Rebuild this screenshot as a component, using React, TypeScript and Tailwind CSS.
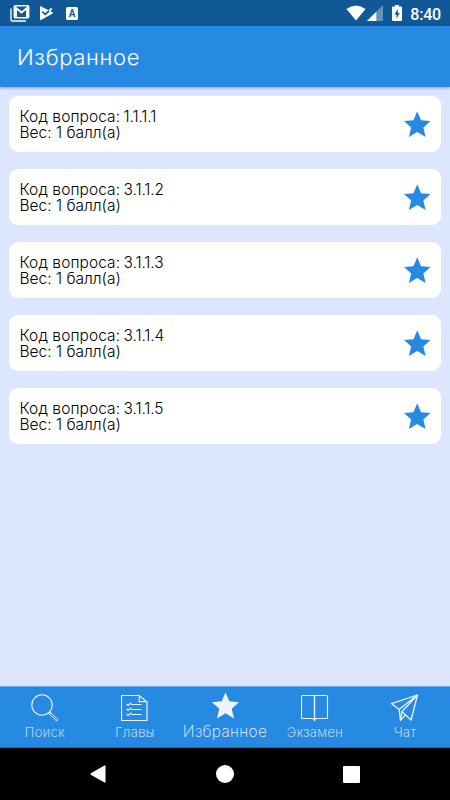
import React, { useState } from "react";
import clsx from "clsx";

const questions = [
  { code: "1.1.1.1", weight: 1, tracking: "tracking-[-0.1px]" },
  { code: "3.1.1.2", weight: 1, tracking: "tracking-[-0.1px]" },
  { code: "3.1.1.3", weight: 1, tracking: "tracking-[-0.1px]" },
  { code: "3.1.1.4", weight: 1, tracking: "tracking-[-0.1px]" },
  { code: "3.1.1.5", weight: 1, tracking: "tracking-[-0.1px]" },
];

function StarIcon({ className }: { className?: string }) {
  return (
    <svg viewBox="0 0 26 26" className={className} fill="currentColor">
      <path d="M13 0.2L16.7 9L26 9.9L19 16.1L21.2 25.4L13 20.5L4.8 25.4L7 16.1L0 9.9L9.3 9Z" />
    </svg>
  );
}

function SearchIcon() {
  return (
    <svg viewBox="0 0 28 28" className="size-7" fill="none" stroke="currentColor">
      <circle cx="11" cy="11" r="10.2" strokeWidth="1.1" />
      <path d="M18 18.4l1.6 1.4" strokeWidth="1" />
      <path d="M19.2 18.4l7.8 7.2l-1.3 1.4l-7.8-7.3z" strokeWidth="0.9" />
    </svg>
  );
}

function ChaptersIcon() {
  return (
    <svg viewBox="1 0 28 28" className="size-7" fill="none" stroke="currentColor" strokeWidth="1.2">
      <path d="M1.5 1.5h17.8l7.7 6.5v18.5H1.5z" />
      <path d="M19.3 1.5v6.2h7.7" />
      <path d="M11 10.5H21.5M11 15.5H21.5M11 20.5H21.5" />
      <path d="M6.5 9.8l1.5 1.6l3.4-2.6M6.5 14.8l1.5 1.6l3.4-2.6M6.5 19.8l1.5 1.6l3.4-2.6" />
    </svg>
  );
}

function BookIcon() {
  return (
    <svg viewBox="1 0 28 28" className="size-7" fill="none" stroke="currentColor" strokeWidth="1.1">
      <path d="M2.5 1.5H26.5Q27.5 1.5 27.5 2.5V23.5Q27.5 24.5 26.5 24.5H16L14.5 26.5L13 24.5H2.5Q1.5 24.5 1.5 23.5V2.5Q1.5 1.5 2.5 1.5Z" />
      <path d="M14.5 1.5V26" strokeWidth="1.4" />
    </svg>
  );
}

function PlaneIcon() {
  return (
    <svg viewBox="0.5 0 28 28" className="size-7" fill="none" stroke="currentColor" strokeWidth="1.3" strokeLinejoin="round">
      <path d="M27 1L1 9.6L8.6 15.4L10 26.4L14.8 20.8L20.6 26Z" />
      <path d="M27 1L8.6 15.4M27 1L11.4 17.6L14.8 20.8M11.4 17.6L10 26" />
    </svg>
  );
}

const tabs = [
  { id: "search", title: "Поиск", icon: <SearchIcon /> },
  { id: "chapters", title: "Главы", icon: <ChaptersIcon /> },
  { id: "favorites", title: "Избранное", icon: <StarIcon className="size-[27px]" /> },
  { id: "exam", title: "Экзамен", icon: <BookIcon /> },
  { id: "chat", title: "Чат", icon: <PlaneIcon /> },
];

function StatusBar() {
  return (
    <div className="flex h-[26px] items-center bg-[#105996] pl-[10px] pr-[9px] text-white">
      <svg viewBox="0 0 20 18" className="h-[18px] w-5" fill="none" stroke="currentColor">
        <path d="M1 4.5V15.8Q1 17 2.2 17H16" strokeWidth="1.3" />
        <rect x="4.4" y="1.8" width="14.2" height="12" rx="0.8" strokeWidth="1.6" />
        <path d="M6 13V4L11.5 8.6L17 4V13" strokeWidth="1.9" />
      </svg>
      <svg viewBox="0 0 14 16" className="ml-[9px] h-4 w-3.5">
        <path d="M1.2 1L13.5 7.2Q14.2 8 13.3 8.7L2 15Q1 15.4 1 14V1.5Z" fill="currentColor" />
        <path d="M3.2 6.6L6.4 9.4L13 3.2" fill="none" stroke="#105996" strokeWidth="1.6" />
        <path d="M10 6L12.8 3.4" fill="none" stroke="currentColor" strokeWidth="1.8" />
      </svg>
      <span className="ml-[13px] flex h-[13px] w-3 items-center justify-center rounded-[1.5px] bg-white font-['Roboto',sans-serif] text-[10px] font-bold text-[#105996]">
        A
      </span>
      <svg viewBox="0 0 20 16" className="ml-auto h-4 w-5" fill="currentColor">
        <path d="M0.4 4Q10-3.2 19.6 4L10 15.5Z" />
      </svg>
      <svg viewBox="0 0 16 16" className="ml-[1px] h-4 w-4" fill="currentColor">
        <path d="M0 16L16 0V16Z" opacity="0.35" />
        <path d="M0 16L9.3 6.7V16Z" />
      </svg>
      <svg viewBox="0 0 10 16" className="ml-[9px] h-4 w-2.5" fill="currentColor">
        <path d="M3 0h4v1.5h2q1 0 1 1V15q0 1-1 1H1q-1 0-1-1V2.5q0-1 1-1H3z" />
        <path d="M5.8 4L2.3 9.4H4.5V13.5L7.8 8H5.8Z" fill="#105996" />
      </svg>
      <span className="ml-[8px] pt-[3px] font-['Roboto',sans-serif] text-[16px] font-medium leading-none tracking-[-0.2px]">
        8:40
      </span>
    </div>
  );
}

export default function App() {
  const [active, setActive] = useState("favorites");

  return (
    <div className="flex h-[800px] w-[450px] flex-col overflow-hidden bg-[#dce6fe] font-['Inter',sans-serif]">
      <StatusBar />
      <header className="z-10 flex h-[61px] items-center bg-[#278ae2] pl-[17px] shadow-[0_1px_3px_rgba(0,0,0,0.35)]">
        <h1 className="text-[22px] font-light leading-none tracking-[0.65px] text-white">Избранное</h1>
      </header>

      <main className="flex flex-1 flex-col gap-[17.5px] px-[9px] pt-[9px]">
        {questions.map((question) => (
          <div
            key={question.code}
            className="flex h-[55.5px] items-center justify-between rounded-[9px] bg-white pl-[10.5px] pr-[10.5px]"
          >
            <div className="pt-[2.5px] text-[15.5px] font-light leading-4 text-black">
              <p className="flex gap-[5px]">
                <span className="w-[99px] whitespace-nowrap tracking-[0.08px]">Код вопроса:</span>
                <span className={question.tracking}>{question.code}</span>
              </p>
              <p>Вес: {question.weight} балл(а)</p>
            </div>
            <StarIcon className="size-[26.5px] text-[#278ae2]" />
          </div>
        ))}
      </main>

      <nav className="grid h-[62px] grid-cols-5 border-y border-t-[#6ba9e8] border-b-[#1b6fbd] bg-[#278ae2] text-[#edf4fd]">
        {tabs.map((tab) => (
          <button
            key={tab.id}
            onClick={() => setActive(tab.id)}
            className="flex flex-col items-center whitespace-nowrap"
          >
            <span className={clsx("flex h-[35px]", active === tab.id ? "pt-[5px]" : "pt-[7px]")}>{tab.icon}</span>
            <span
              className={clsx(
                "font-extralight leading-[20px]",
                active === tab.id ? "text-[15.5px] tracking-[0.3px]" : "text-[13px] tracking-[0.4px]"
              )}
            >
              {tab.title}
            </span>
          </button>
        ))}
      </nav>

      <div className="flex h-[52px] items-center bg-black pl-[90px] pr-[90px] text-white">
        <svg viewBox="0 0 16 18" className="h-[18px] w-4" fill="currentColor">
          <path d="M15.5 1V17Q15.5 18 14.5 17.5L0.8 9.7Q0 9 0.8 8.3L14.5 0.5Q15.5 0 15.5 1Z" />
        </svg>
        <span className="ml-[110px] size-[18px] rounded-full bg-white" />
        <span className="ml-auto size-[17px] rounded-[1px] bg-white" />
      </div>
    </div>
  );
}
